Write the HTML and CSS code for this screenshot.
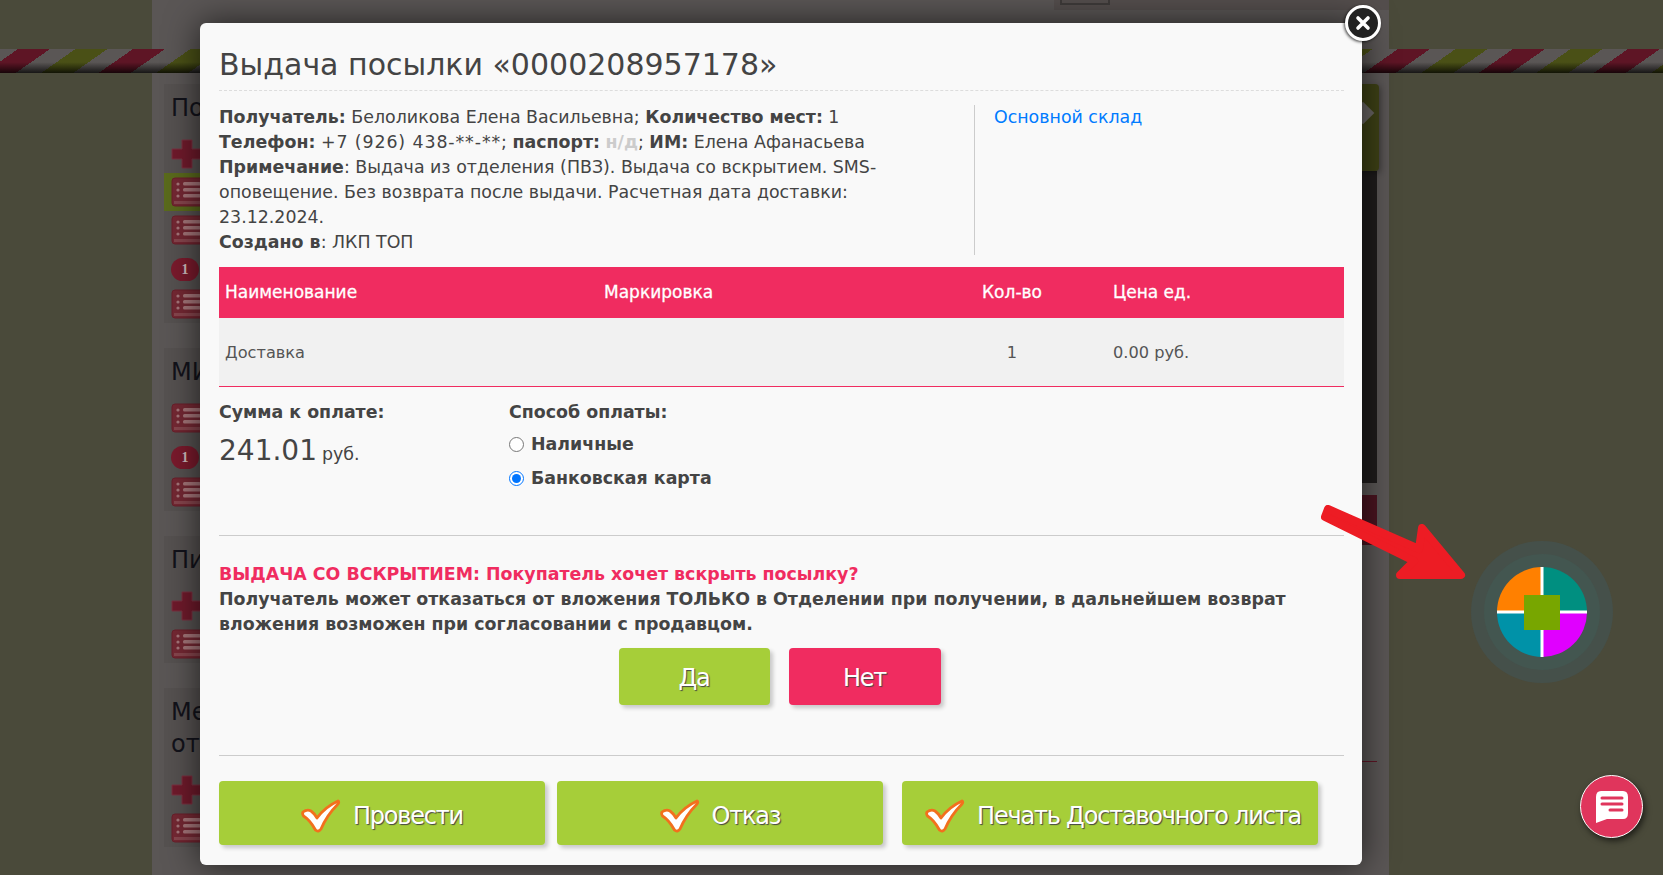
FILE: index.html
```html
<!DOCTYPE html>
<html lang="en">

<head>
    <meta charset="UTF-8">
    <meta name="viewport" content="width=device-width, initial-scale=1.0">
    <title>Выдача посылки</title>
    <link rel="stylesheet" href="styles.css">
</head>

<body>

    <svg class="icon-defs" width="0" height="0">
        <defs>
            <symbol id="list-icon" viewBox="0 0 34 30">
                <rect x="1" y="1" width="32" height="28" rx="3" fill="#742833" stroke="#6a1f2a" />
                <rect x="3" y="24" width="28" height="3" fill="#86454d" />
                <circle cx="7" cy="7" r="1.6" fill="#a5767a" />
                <circle cx="7" cy="13" r="1.6" fill="#a5767a" />
                <circle cx="7" cy="19" r="1.6" fill="#a5767a" />
                <rect x="12" y="5" width="18" height="3.5" rx="1.5" fill="#a5767a" />
                <rect x="12" y="11" width="18" height="3.5" rx="1.5" fill="#a5767a" />
                <rect x="12" y="17" width="18" height="3.5" rx="1.5" fill="#a5767a" />
            </symbol>
            <symbol id="plus-icon" viewBox="0 0 34 30">
                <path d="M11 1h10v9h11v10H21v9H11v-9H1V10h10z" fill="#6f1a2b" stroke="#7b3040" />
            </symbol>
            <symbol id="check-icon" viewBox="0 0 40 34">
                <path d="M2 13 Q6 10 10 12 Q13 14 16 19 Q24 8 37 2 Q38.5 3 37 5 Q26 16 20 30 Q17.5 33.5 14.5 31 Q9 21 2.5 17 Q1 15 2 13Z" fill="#fff" stroke="#f2701d" stroke-width="2.8" stroke-linejoin="round" />
            </symbol>
        </defs>
    </svg>

    <div class="page">
        <div class="site-header">
            <div class="header-tab">
                <span class="tab-icon"></span>
            </div>
            <div class="stripes"></div>
        </div>

        <div class="site-body">
            <div class="side-col">
                <div class="panel">
                    <div class="panel-title">По</div>
                    <div class="row"><svg class="ic"><use href="#plus-icon" /></svg></div>
                    <div class="row row-active"><svg class="ic"><use href="#list-icon" /></svg></div>
                    <div class="row"><svg class="ic"><use href="#list-icon" /></svg></div>
                    <div class="badge">1</div>
                    <div class="row"><svg class="ic"><use href="#list-icon" /></svg></div>
                </div>
                <div class="panel">
                    <div class="panel-title">МИ</div>
                    <div class="row"><svg class="ic"><use href="#list-icon" /></svg></div>
                    <div class="badge">1</div>
                    <div class="row"><svg class="ic"><use href="#list-icon" /></svg></div>
                </div>
                <div class="panel">
                    <div class="panel-title">Пи</div>
                    <div class="row"><svg class="ic"><use href="#plus-icon" /></svg></div>
                    <div class="row"><svg class="ic"><use href="#list-icon" /></svg></div>
                </div>
                <div class="panel">
                    <div class="panel-title">Ме<br>отп</div>
                    <div class="row"><svg class="ic"><use href="#plus-icon" /></svg></div>
                    <div class="row"><svg class="ic"><use href="#list-icon" /></svg></div>
                </div>
            </div>

            <div class="main-col">
                <div class="green-box"><span class="diamond"></span></div>
                <div class="dark-box"></div>
                <div class="red-box"></div>
                <div class="red-line"></div>
            </div>
        </div>
    </div>

    <div class="modal">
        <button class="modal-close" type="button">
            <svg width="16" height="16" viewBox="0 0 16 16">
                <path d="M3 3l10 10M13 3L3 13" stroke="#fff" stroke-width="3.6" stroke-linecap="round" />
            </svg>
        </button>

        <h1 class="modal-title">Выдача посылки «0000208957178»</h1>

        <div class="info">
            <div class="info-text">
                <b>Получатель:</b> Белоликова Елена Васильевна; <b>Количество мест:</b> 1<br>
                <b>Телефон:</b> <span class="phone">+7 (926) 438-**-**</span>; <b>паспорт:</b> <span class="muted">н/д</span>; <b>ИМ:</b> Елена Афанасьева<br>
                <b>Примечание</b>: Выдача из отделения (ПВЗ). Выдача со вскрытием. SMS-<br>
                оповещение. Без возврата после выдачи. Расчетная дата доставки:<br>
                23.12.2024.<br>
                <b>Создано в</b>: ЛКП ТОП
            </div>
            <div class="info-side">
                <a class="store-link" href="#">Основной склад</a>
            </div>
        </div>

        <table class="goods">
            <thead>
                <tr>
                    <th class="col-name">Наименование</th>
                    <th class="col-mark">Маркировка</th>
                    <th class="col-qty">Кол-во</th>
                    <th class="col-price">Цена ед.</th>
                </tr>
            </thead>
            <tbody>
                <tr>
                    <td>Доставка</td>
                    <td></td>
                    <td class="col-qty">1</td>
                    <td>0.00 руб.</td>
                </tr>
            </tbody>
        </table>

        <div class="payment">
            <div class="sum">
                <div class="label">Сумма к оплате:</div>
                <div class="amount">241.01<small>руб.</small></div>
            </div>
            <div class="method">
                <div class="label">Способ оплаты:</div>
                <label class="radio"><input type="radio" name="pay"> Наличные</label>
                <label class="radio"><input type="radio" name="pay" checked> Банковская карта</label>
            </div>
        </div>

        <div class="opening">
            <div class="opening-title">ВЫДАЧА СО ВСКРЫТИЕМ: Покупатель хочет вскрыть посылку?</div>
            <div class="opening-text">Получатель может отказаться от вложения ТОЛЬКО в Отделении при получении, в дальнейшем возврат вложения возможен при согласовании с продавцом.</div>
            <div class="opening-btns">
                <button class="btn btn-yes" type="button">Да</button>
                <button class="btn btn-no" type="button">Нет</button>
            </div>
        </div>

        <div class="actions">
            <button class="btn btn-action w-short" type="button"><svg class="check"><use href="#check-icon" /></svg>Провести</button>
            <button class="btn btn-action w-short" type="button"><svg class="check"><use href="#check-icon" /></svg>Отказ</button>
            <button class="btn btn-action w-long" type="button"><svg class="check"><use href="#check-icon" /></svg>Печать Доставочного листа</button>
        </div>
    </div>

    <svg class="arrow" width="160" height="90" viewBox="0 0 160 90">
        <path d="M7 4L98 44L101 23L140 70H79L93 56L4 12Z" fill="#ed1c24" stroke="#ed1c24" stroke-width="8" stroke-linejoin="round" />
    </svg>

    <svg class="widget" width="142" height="142" viewBox="0 0 142 142">
        <circle cx="71" cy="71" r="71" fill="#45504a" />
        <circle cx="71" cy="71" r="58" fill="#435650" />
        <path d="M71 71V26A45 45 0 0 0 26 71Z" fill="#ff8000" />
        <path d="M71 71V26A45 45 0 0 1 116 71Z" fill="#008f80" />
        <path d="M71 71H26A45 45 0 0 0 71 116Z" fill="#0092a8" />
        <path d="M71 71H116A45 45 0 0 1 71 116Z" fill="#e000ff" />
        <path d="M71 26V116M26 71H116" stroke="#fff" stroke-width="3" />
        <rect x="53" y="54" width="36" height="35" fill="#78a600" />
    </svg>

    <button class="chat" type="button">
        <svg width="34" height="32" viewBox="0 0 34 32">
            <path d="M6 0H28Q33 0 33 6V22Q33 28 28 28H12L1 32V6Q1 0 6 0Z" fill="#fff" />
            <path d="M7 7H27M7 13H27M15 19H27" stroke="#e0355c" stroke-width="3" stroke-linecap="round" />
        </svg>
    </button>

</body>

</html>
```
FILE: styles.css
```css
body,
html {
    margin: 0;
    padding: 0;
    height: 100%;
    font-family: "DejaVu Sans", sans-serif;
    overflow: hidden; /* Prevent scrolling */
    background-color: #4a4a3a;
}

.icon-defs {
    display: block;
}

.page {
    width: 1237px;
    height: 875px;
    margin-left: 152px;
    background-color: #5a5655;
    overflow: hidden;
}

.site-header {
    height: 73px;
}

.header-tab {
    height: 10px;
    width: 335px;
    margin-left: auto;
    background-color: #544e4d;
}

.tab-icon {
    display: block;
    width: 50px;
    height: 5px;
    margin-left: 6px;
    box-sizing: border-box;
    border: 2px solid #3e3a39;
    border-top: none;
}

/* Stripes run the whole window, wider than the centre column */
.stripes {
    position: absolute;
    top: 49px;
    left: 0;
    width: 1663px;
    height: 24px;
    background:
        linear-gradient(to bottom, transparent 55%, rgba(0, 0, 0, 0.75) 100%),
        repeating-linear-gradient(145.1deg,
            #5a5655 0, #5a5655 10.3px,
            #5e1525 10.3px, #5e1525 28.6px,
            #5a5655 28.6px, #5a5655 43.2px,
            #4a5016 43.2px, #4a5016 61.5px,
            #5a5655 61.5px, #5a5655 65.8px);
}

.site-body {
    display: flex;
    justify-content: space-between;
    padding: 11px 12px 0;
}

.side-col {
    width: 240px;
}

.panel {
    background-color: #555150;
    padding: 8px 0 0 7px;
    margin-bottom: 25px;
}

.panel-title {
    font-size: 24px;
    line-height: 32px;
    color: #12121a;
    margin-bottom: 11px;
}

.row {
    height: 38px;
    margin-left: -7px;
    padding-left: 7px;
    display: flex;
    align-items: center;
}

.row-active {
    background-color: #5a6a1c;
}

.ic {
    width: 34px;
    height: 30px;
}

.badge {
    width: 28px;
    height: 23px;
    margin: 9px 0 4px 0;
    border-radius: 12px;
    background-color: #7a1a2c;
    color: #cbb;
    font: bold 14px/23px "Liberation Serif", serif;
    text-align: center;
}

.main-col {
    width: 300px;
}

.green-box {
    height: 87px;
    margin-right: -2px;
    border-radius: 4px;
    background-color: #3d4015;
    box-shadow: 2px 2px 6px rgba(0, 0, 0, 0.3);
    position: relative;
}

.diamond {
    position: absolute;
    right: 8px;
    top: 21px;
    width: 16px;
    height: 16px;
    background-color: #686462;
    transform: rotate(45deg);
}

.dark-box {
    height: 312px;
    background-color: #1f1c1c;
}

.red-box {
    height: 50px;
    margin-top: 12px;
    background-color: #4a1420;
}

.red-line {
    height: 1px;
    margin-top: 216px;
    background-color: #5e1525;
}

/* modal */
.modal {
    position: absolute;
    top: 23px;
    left: 200px;
    width: 1162px;
    height: 842px;
    box-sizing: border-box;
    padding: 0 18px 0 19px;
    border-radius: 6px;
    background-color: #f9f9f9;
    color: #444;
    box-shadow: 0 0 34px rgba(0, 0, 0, 0.65);
    font-size: 17.4px;
    line-height: 25px;
}

.modal-close {
    position: absolute;
    top: -18px;
    right: -19px;
    width: 36px;
    height: 36px;
    padding: 0;
    border: 3px solid #fff;
    border-radius: 50%;
    background-color: #222;
    box-shadow: -1px 1px 3px rgba(0, 0, 0, 0.7);
    display: flex;
    align-items: center;
    justify-content: center;
}

.modal-title {
    margin: 0;
    height: 68px;
    box-sizing: border-box;
    padding-top: 23px;
    font-size: 30px;
    line-height: 38px;
    font-weight: normal;
    border-bottom: 1px dashed #ddd;
}

.info {
    display: flex;
    margin-top: 14px;
}

.info-text {
    width: 756px;
    box-sizing: border-box;
    padding-right: 40px;
    border-right: 1px solid #ccc;
}

.info-side {
    padding-left: 19px;
}

.phone {
    letter-spacing: 0.9px;
}

.muted {
    color: #ccc;
    font-weight: bold;
}

.store-link {
    color: #007bff;
    text-decoration: none;
}

.goods {
    width: 100%;
    margin-top: 12px;
    border-collapse: collapse;
    table-layout: fixed;
}

.goods th {
    box-sizing: border-box;
    height: 51px;
    padding: 0 6px;
    background-color: #f02c60;
    color: #fff;
    text-align: left;
    font-weight: normal;
    font-size: 17px;
    -webkit-text-stroke: 0.3px #fff;
}

.goods td {
    height: 68px;
    padding: 0 6px;
    background-color: #f1f1f1;
    border-bottom: 1px solid #f02c60;
    color: #555;
    font-size: 16.2px;
}

.col-name {
    width: 379px;
}

.col-mark {
    width: 319px;
}

.col-qty {
    width: 190px;
}

.goods .col-qty {
    text-align: center;
}

.payment {
    display: flex;
    margin-top: 13px;
    height: 135px;
}

.sum {
    width: 290px;
}

.label {
    font-weight: bold;
}

.amount {
    margin-top: 13px;
    font-size: 28px;
    line-height: 25px;
}

.amount small {
    font-size: 17.4px;
    margin-left: 5px;
}

.radio {
    display: flex;
    align-items: center;
    gap: 7px;
    margin-top: 9px;
    font-weight: bold;
}

.label + .radio {
    margin-top: 7px;
}

.radio input {
    width: 15px;
    height: 15px;
    margin: 0;
}

.opening {
    height: 221px;
    box-sizing: border-box;
    padding-top: 26px;
    border-top: 1px solid #ccc;
    border-bottom: 1px solid #ccc;
}

.opening-title {
    color: #f02c60;
    font-weight: bold;
}

.opening-text {
    font-weight: bold;
}

.opening-btns {
    display: flex;
    justify-content: center;
    gap: 19px;
    margin-top: 11px;
    padding-right: 4px;
}

.btn {
    height: 57px;
    padding: 3px 0 0;
    border: none;
    border-radius: 4px;
    color: #fff;
    font-family: inherit;
    font-size: 24px;
    letter-spacing: -1.2px;
    text-shadow: 1px 1px 1px #444;
    box-shadow: 3px 3px 4px rgba(0, 0, 0, 0.2);
}

.btn-yes {
    width: 151px;
    background-color: #a6ce39;
}

.btn-no {
    width: 152px;
    background-color: #f02c60;
}

.actions {
    display: flex;
    gap: 12px;
    margin-top: 25px;
}

.btn-action {
    height: 64px;
    padding-top: 6px;
    background-color: #a6ce39;
    display: flex;
    align-items: center;
    justify-content: center;
    gap: 12px;
}

.w-short {
    width: 326px;
}

.w-long {
    width: 416px;
    margin-left: 7px;
    padding-left: 6px;
}

.check {
    width: 40px;
    height: 34px;
}

/* widgets on top of everything */
.arrow {
    position: absolute;
    left: 1321px;
    top: 505px;
}

.widget {
    position: absolute;
    left: 1471px;
    top: 541px;
}

.chat {
    position: absolute;
    left: 1580px;
    top: 775px;
    width: 63px;
    height: 63px;
    padding: 0;
    border: 1px solid #fff;
    border-radius: 50%;
    background-color: #e0355c;
    box-shadow: 2px 3px 6px rgba(0, 0, 0, 0.6);
    display: flex;
    align-items: center;
    justify-content: center;
}
```
